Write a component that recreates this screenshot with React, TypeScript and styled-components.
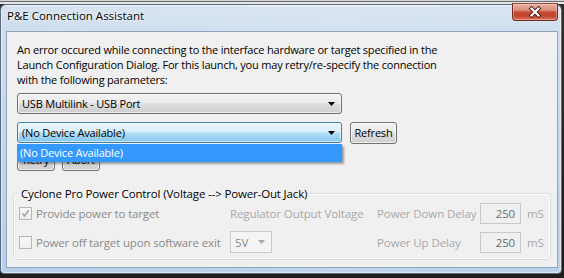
import React from "react";
import styled, { createGlobalStyle } from "styled-components";

const Global = createGlobalStyle`
  html, body { margin: 0; padding: 0; }
  body {
    width: 564px; height: 278px; overflow: hidden;
    font-family: "Open Sans", "Noto Sans", sans-serif;
    background: #2b2b2b;
  }
  #root { width: 564px; height: 278px; }
`;

const Desktop = styled.div`
  width: 564px;
  height: 278px;
  box-sizing: border-box;
  padding: 4px 2px 0 0;
  background: linear-gradient(180deg, #d4d4d4 0, #d4d4d4 1px, #6a6a6a 1px, #6a6a6a 2px, #e6e6e6 2px, #e6e6e6 4px, #2e2e2e 4px, #1f1f1f 100%);
`;

const Window = styled.div`
  width: 562px;
  height: 270px;
  box-sizing: border-box;
  border: 1px solid #5a6b80;
  border-radius: 6px 6px 4px 4px;
  background: linear-gradient(90deg, rgba(255,255,255,0) 0%, rgba(255,255,255,0.12) 60%, rgba(255,255,255,0.05) 100%),
    linear-gradient(180deg, #d6e3f0 0%, #cddcee 10%, #c0d5eb 60%, #b7cfe9 100%);
  box-shadow: inset 0 0 0 1px rgba(255, 255, 255, 0.5);
  display: flex;
  flex-direction: column;
`;

const TitleBar = styled.div`
  height: 26px;
  flex-shrink: 0;
  display: flex;
  justify-content: space-between;
  align-items: flex-start;
  padding-left: 6px;
`;

const Title = styled.div`
  font-size: 11.5px;
  line-height: 22px;
  color: #000;
  text-shadow: 0 0 5px rgba(255, 255, 255, 0.95), 0 0 2px rgba(255, 255, 255, 0.9);
`;

const CloseButton = styled.div`
  width: 46px;
  height: 18px;
  margin-top: -2px;
  margin-right: 3px;
  box-sizing: border-box;
  border: 1px solid #6e2a1f;
  border-top-color: #8a4a40;
  border-radius: 0 0 4px 4px;
  background: linear-gradient(180deg, #eab3a6 0%, #dc8a78 40%, #c94a33 50%, #c4432d 75%, #d9735c 100%);
  box-shadow: inset 0 0 0 1px rgba(255, 210, 200, 0.45);
  display: flex;
  align-items: center;
  justify-content: center;
`;

const Frame = styled.div`
  flex: 1;
  display: flex;
  padding: 0 3px 5px 5px;
  min-height: 0;
`;

const Client = styled.div`
  flex: 1;
  border: 1px solid #8fa5be;
  background: #f0f0f0;
  padding: 10px 6px 5px 6px;
  display: flex;
  flex-direction: column;
  font-size: 11px;
  letter-spacing: -0.2px;
  color: #000;
`;

const TopSection = styled.div`
  padding: 0 4px;
  display: flex;
  flex-direction: column;
`;

const Message = styled.p`
  margin: 0;
  line-height: 15px;
`;

const Row = styled.div<{ $gap: number }>`
  display: flex;
  gap: 8px;
  margin-top: ${(p) => p.$gap}px;
`;

const ComboWrap = styled.div`
  position: relative;
`;

const Combo = styled.div<{ $focused?: boolean }>`
  width: 325px;
  height: 21px;
  box-sizing: border-box;
  border: 1px solid ${(p) => (p.$focused ? "#3c7fb1" : "#707070")};
  border-radius: 3px;
  padding: 0 6px 0 4px;
  display: flex;
  align-items: center;
  justify-content: space-between;
  line-height: 19px;
  background: ${(p) =>
    p.$focused
      ? "linear-gradient(180deg, #eaf6fd 0%, #d9f0fc 45%, #b3dff7 52%, #86c5ec 100%)"
      : "linear-gradient(180deg, #f2f2f2 0%, #ebebeb 45%, #dddddd 52%, #cfcfcf 100%)"};
  box-shadow: inset 0 0 0 1px rgba(255, 255, 255, 0.6);
`;

const ListPopup = styled.div`
  position: absolute;
  left: 0;
  top: 100%;
  width: 325px;
  height: 18px;
  box-sizing: border-box;
  padding-left: 3px;
  line-height: 18px;
  background: #3399ff;
  color: #fff;
  box-shadow: 2px 2px 2px rgba(0, 0, 0, 0.35);
  z-index: 2;
`;

const Button = styled.div<{ $w: number }>`
  width: ${(p) => p.$w}px;
  height: 22px;
  box-sizing: border-box;
  border: 1px solid #707070;
  border-radius: 3px;
  background: linear-gradient(180deg, #f2f2f2 0%, #ebebeb 45%, #dddddd 52%, #cfcfcf 100%);
  box-shadow: inset 0 0 0 1px rgba(255, 255, 255, 0.7);
  display: flex;
  align-items: center;
  justify-content: center;
  line-height: 20px;
`;

const ButtonRow = styled.div`
  display: flex;
  gap: 7px;
  margin-top: 5px;
`;

const Group = styled.fieldset`
  margin: 15px 0 0 0;
  padding: 1px 5px 6px 5px;
  border: 1px solid #d5dfe5;
  border-radius: 3px;
  box-shadow: inset 0 0 0 1px #fff;
  min-width: 0;
  font-size: 11.5px;
  letter-spacing: -0.15px;
`;

const Legend = styled.legend`
  padding: 0 2px;
  line-height: 15px;
  color: #000;
`;

const Grid = styled.div`
  display: grid;
  grid-template-columns: 211px 147px 103px 41px auto;
  grid-auto-rows: 22px;
  row-gap: 7px;
  align-items: center;
`;

const CheckItem = styled.div`
  display: flex;
  align-items: center;
  gap: 4px;
  color: #8a8a8a;
`;

const CheckBox = styled.span`
  width: 13px;
  height: 13px;
  flex-shrink: 0;
  box-sizing: border-box;
  border: 1px solid #b7b7b7;
  background: linear-gradient(180deg, #f7f7f7, #eeeeee);
  display: flex;
  align-items: center;
  justify-content: center;
`;

const Faint = styled.span`
  color: #a8a8a8;
  letter-spacing: -0.1px;
`;

const NumBox = styled.div`
  width: 41px;
  height: 21px;
  box-sizing: border-box;
  border: 1px solid #c9c9c9;
  background: #f0f0f0;
  text-align: right;
  padding-right: 5px;
  line-height: 19px;
  color: #6d6d6d;
`;

const Unit = styled.span`
  color: #a8a8a8;
  margin-left: 6px;
`;

const SmallCombo = styled.div`
  width: 42px;
  height: 22px;
  box-sizing: border-box;
  border: 1px solid #c9c9c9;
  background: #f4f4f4;
  display: flex;
  align-items: center;
  justify-content: space-between;
  padding: 0 6px 0 4px;
  color: #8a8a8a;
`;

const Arrow = ({ color = "#000" }: { color?: string }) => (
  <svg width="7" height="4" viewBox="0 0 7 4">
    <polygon points="0,0 7,0 3.5,4" fill={color} />
  </svg>
);

const CloseGlyph = () => (
  <svg width="14" height="12" viewBox="0 0 14 12">
    <g strokeLinecap="square">
      <path d="M3.5 2.5 L10.5 9.5 M10.5 2.5 L3.5 9.5" stroke="#4b1a13" strokeWidth="4" />
      <path d="M3.5 2.5 L10.5 9.5 M10.5 2.5 L3.5 9.5" stroke="#ffffff" strokeWidth="2.2" />
    </g>
  </svg>
);

const Check = () => (
  <svg width="9" height="9" viewBox="0 0 9 9">
    <path d="M1.5 4.5 L3.6 7 L7.6 1.2" stroke="#a4a4a4" strokeWidth="1.6" fill="none" />
  </svg>
);

export default function App() {
  return (
    <>
      <Global />
      <Desktop>
        <Window>
          <TitleBar>
            <Title>P&amp;E Connection Assistant</Title>
            <CloseButton>
              <CloseGlyph />
            </CloseButton>
          </TitleBar>
          <Frame>
            <Client>
              <TopSection>
                <Message>
                  An error occured while connecting to the interface hardware or target specified in the
                  <br />
                  Launch Configuration Dialog. For this launch, you may retry/re-specify the connection
                  <br />
                  with the following parameters:
                </Message>
                <Row $gap={6}>
                  <Combo>
                    <span>USB Multilink - USB Port</span>
                    <Arrow />
                  </Combo>
                </Row>
                <Row $gap={8}>
                  <ComboWrap>
                    <Combo $focused>
                      <span>(No Device Available)</span>
                      <Arrow />
                    </Combo>
                    <ListPopup>(No Device Available)</ListPopup>
                  </ComboWrap>
                  <Button $w={47}>Refresh</Button>
                </Row>
                <ButtonRow>
                  <Button $w={38}>Retry</Button>
                  <Button $w={38}>Abort</Button>
                </ButtonRow>
              </TopSection>
              <Group>
                <Legend>Cyclone Pro Power Control (Voltage --&gt; Power-Out Jack)</Legend>
                <Grid>
                  <CheckItem>
                    <CheckBox>
                      <Check />
                    </CheckBox>
                    Provide power to target
                  </CheckItem>
                  <Faint>Regulator Output Voltage</Faint>
                  <Faint>Power Down Delay</Faint>
                  <NumBox>250</NumBox>
                  <Unit>mS</Unit>
                  <CheckItem>
                    <CheckBox />
                    Power off target upon software exit
                  </CheckItem>
                  <div>
                    <SmallCombo>
                      <span>5V</span>
                      <Arrow color="#a8a8a8" />
                    </SmallCombo>
                  </div>
                  <Faint>Power Up Delay</Faint>
                  <NumBox>250</NumBox>
                  <Unit>mS</Unit>
                </Grid>
              </Group>
            </Client>
          </Frame>
        </Window>
      </Desktop>
    </>
  );
}
